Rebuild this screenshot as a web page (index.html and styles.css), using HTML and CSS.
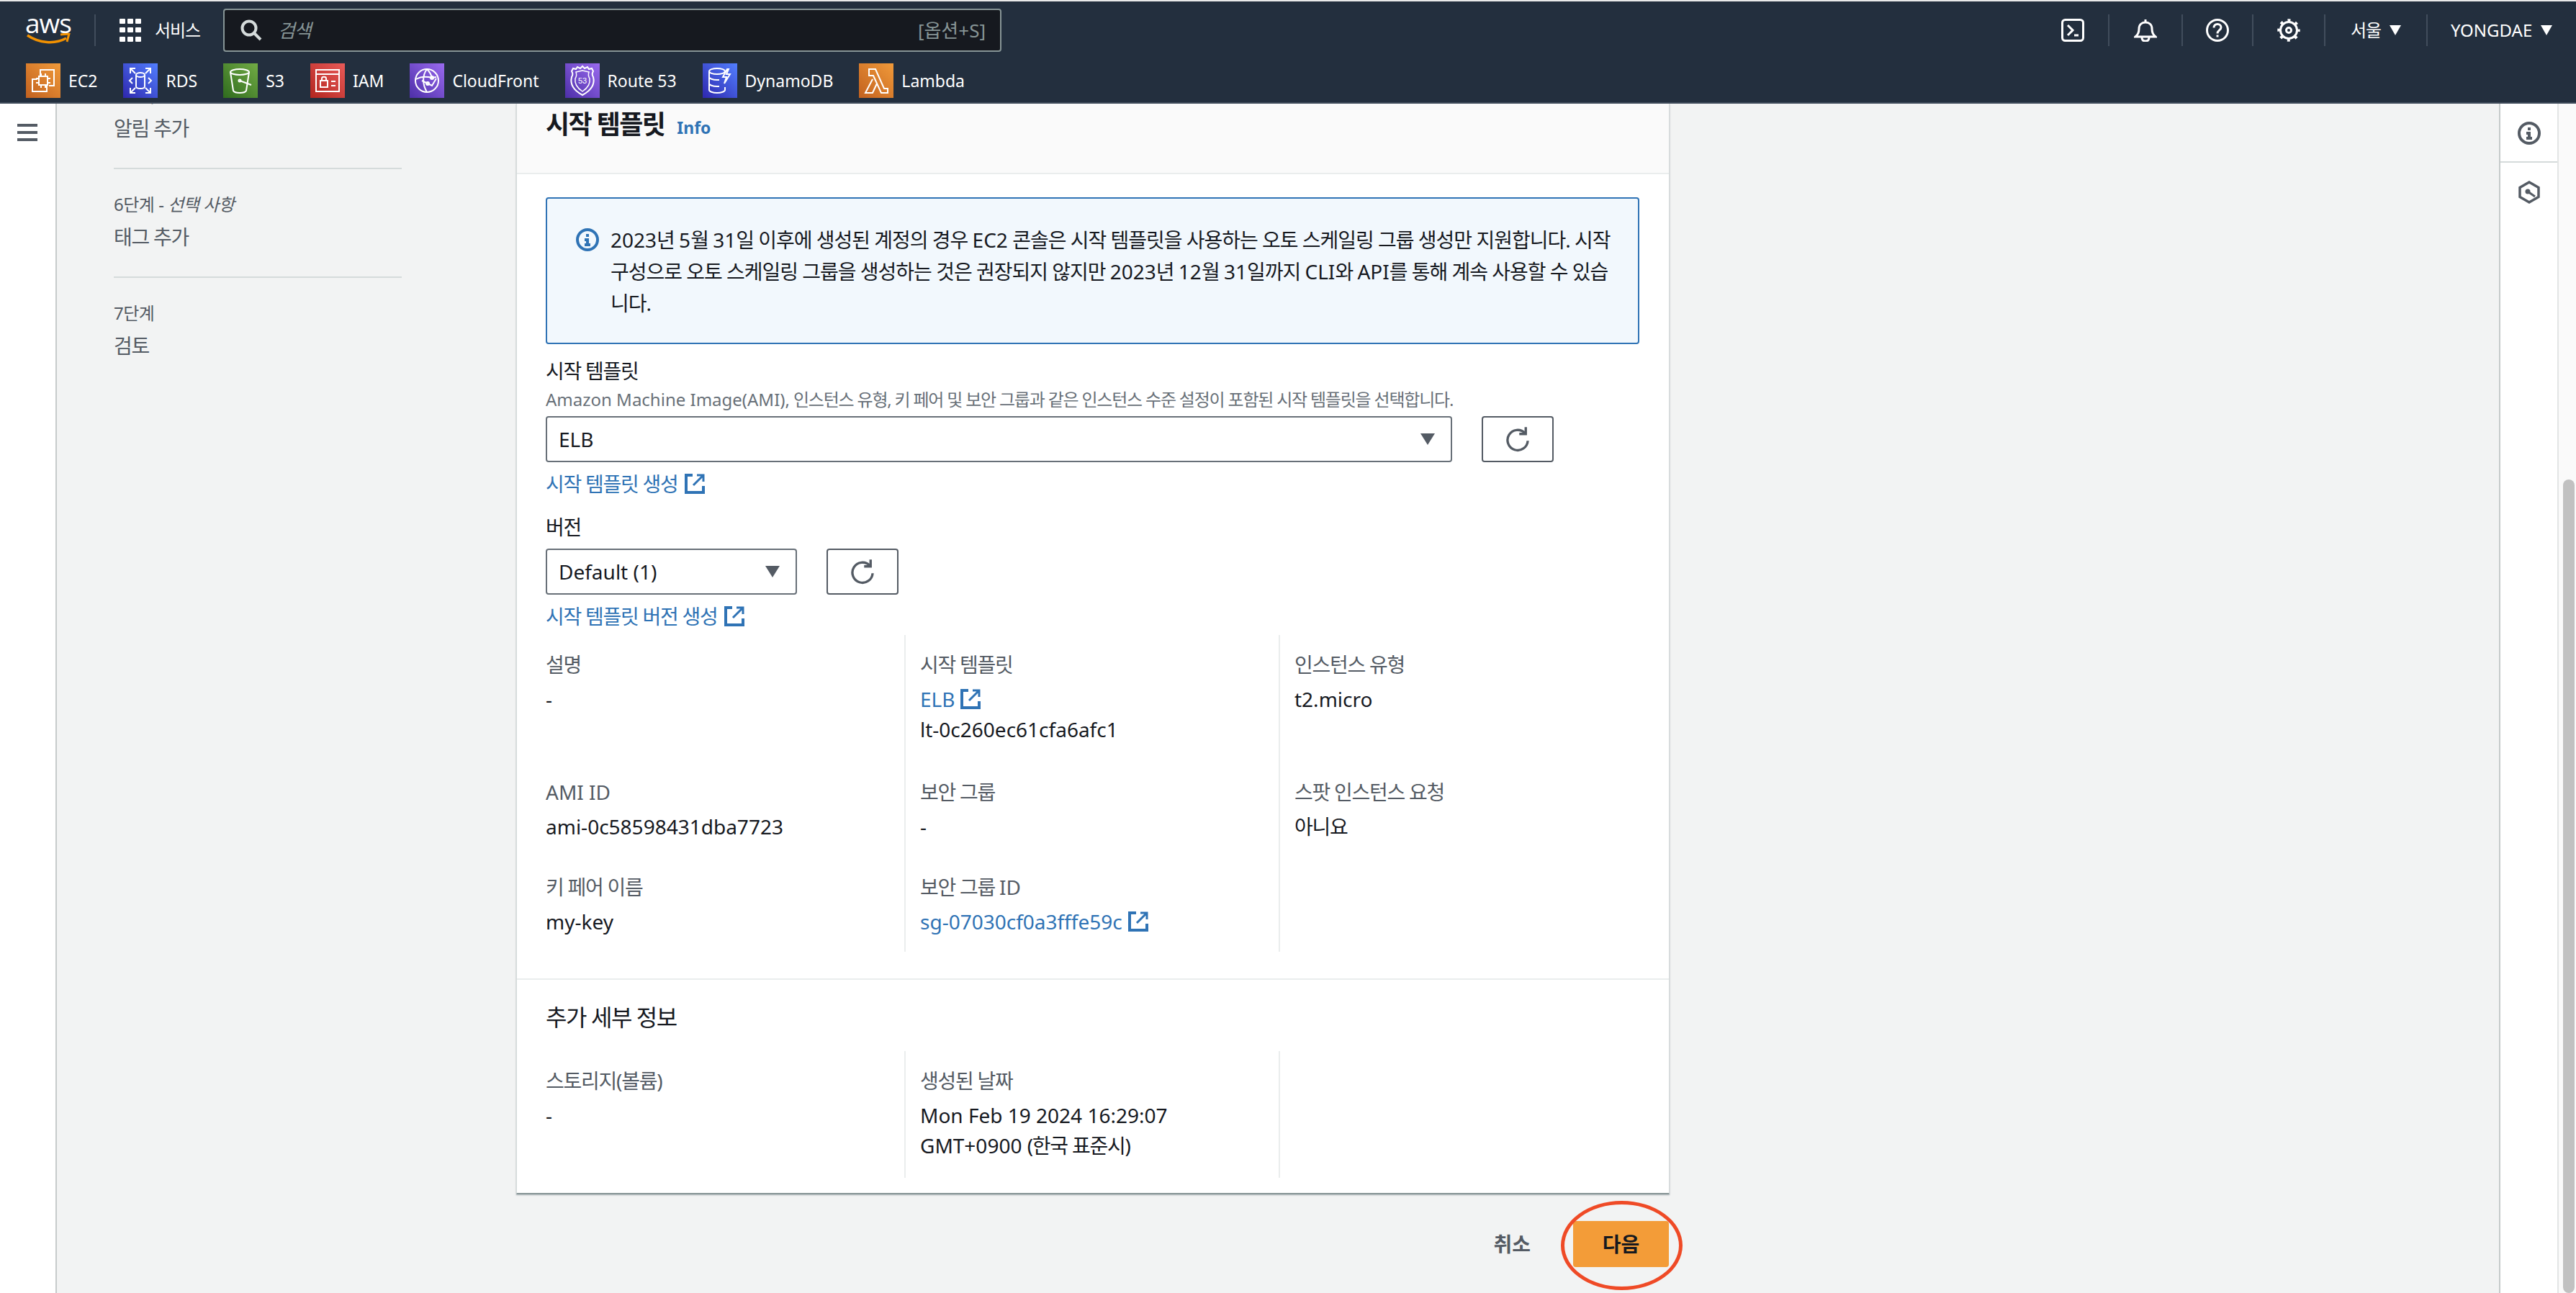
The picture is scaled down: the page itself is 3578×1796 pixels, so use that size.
FILE: index.html

```html
<!DOCTYPE html>
<html lang="ko">
<head>
    <meta charset="UTF-8">
    <title>Auto Scaling 그룹 생성</title>
    <link rel="stylesheet" href="styles.css">
</head>
<body>
    <header class="topbar">
        <div class="toprow">
            <div class="logo">
                <span class="logo-text">aws</span>
                <svg class="logo-smile" width="62" height="18" viewBox="0 0 62 18"><path d="M2 3c16 11 38 13 54 4" fill="none" stroke="#f29100" stroke-width="3.500"/><path d="M48 2l12-1-3 11" fill="none" stroke="#f29100" stroke-width="3"/></svg>
            </div>
            <div class="top-divider"></div>
            <svg class="grid-icon" width="30" height="32" viewBox="0 0 30 32" fill="#fff">
                <rect x="0" y="0" width="8" height="7" rx="1"/><rect x="11" y="0" width="8" height="7" rx="1"/><rect x="22" y="0" width="8" height="7" rx="1"/>
                <rect x="0" y="12" width="8" height="7" rx="1"/><rect x="11" y="12" width="8" height="7" rx="1"/><rect x="22" y="12" width="8" height="7" rx="1"/>
                <rect x="0" y="25" width="8" height="7" rx="1"/><rect x="11" y="25" width="8" height="7" rx="1"/><rect x="22" y="25" width="8" height="7" rx="1"/>
            </svg>
            <span class="services">서비스</span>
            <div class="search">
                <svg width="30" height="30" viewBox="0 0 30 30" fill="none" stroke="#d5dbdb" stroke-width="4"><circle cx="12" cy="12" r="9.500"/><path d="M19 19l9 9"/></svg>
                <span class="search-text">검색</span>
                <span class="search-key">[옵션+S]</span>
            </div>
            <div class="top-right">
                <div class="top-cell console">
                    <svg width="32" height="32" viewBox="0 0 32 32" fill="none" stroke="#fff" stroke-width="3"><rect x="1.500" y="1.500" width="29" height="29" rx="4"/><path d="M9 9l7 7-7 7"/><path d="M18 23h6"/></svg>
                </div>
                <div class="top-cell bell">
                    <svg width="32" height="32" viewBox="0 0 32 32" fill="none" stroke="#fff" stroke-width="3"><path d="M16 1v3"/><path d="M2 25c4-3 5-6 5-11 0-6 4-9 9-9s9 3 9 9c0 5 1 8 5 11z"/><path d="M11 26c0 4 2 5 5 5s5-1 5-5"/></svg>
                </div>
                <div class="top-cell help">
                    <svg width="32" height="32" viewBox="0 0 32 32" fill="none" stroke="#fff" stroke-width="3"><circle cx="16" cy="16" r="14.500"/><path d="M11 12.500c0-3 2-5 5-5s5 2 5 4.500c0 4-5 4-5 8.500"/><path d="M16 22.500v3"/></svg>
                </div>
                <div class="top-cell gear">
                    <svg width="32" height="32" viewBox="0 0 32 32" fill="none" stroke="#fff"><circle cx="16" cy="16" r="11.500" stroke-width="3"/><circle cx="16" cy="16" r="14" stroke-width="3.500" stroke-dasharray="4 7" stroke-dashoffset="2"/><circle cx="16" cy="16" r="3.500" stroke-width="3"/></svg>
                </div>
                <div class="top-cell region"><span>서울</span><i class="caret-white"></i></div>
                <div class="top-cell user"><span>YONGDAE</span><i class="caret-white"></i></div>
            </div>
        </div>
        <nav class="favorites">
            <a class="fav"><span class="svc orange"><svg width="48" height="48" viewBox="0 0 48 48" fill="none" stroke="#fff" stroke-width="2"><path d="M20 17v-8h19v22h-7"/><path d="M16 22H9v17h20v-8"/><rect x="18" y="18" width="12" height="12"/><path d="M21 14v4M27 14v4M21 30v4M27 30v4M14 21h4M14 27h4M30 21h4M30 27h4"/></svg></span>EC2</a>
            <a class="fav"><span class="svc blue"><svg width="48" height="48" viewBox="0 0 48 48" fill="none" stroke="#fff" stroke-width="2"><ellipse cx="24" cy="16" rx="6" ry="3"/><path d="M18 16v16c0 2 3 3 6 3s6-1 6-3V16"/><path d="M10 14V7h7M38 14V7h-7M10 34v7h7M38 34v7h-7M10 7l7 7M38 7l-7 7M10 41l7-7M38 41l-7-7"/><path d="M13 20l-4 4 4 4M35 20l4 4-4 4"/></svg></span>RDS</a>
            <a class="fav"><span class="svc green"><svg width="48" height="48" viewBox="0 0 48 48" fill="none" stroke="#fff" stroke-width="2"><ellipse cx="23" cy="12" rx="13" ry="4"/><path d="M10 12l4 26c1 2 5 3 9 3s8-1 9-3l4-26"/><path d="M23 24l16 6"/><circle cx="23" cy="24" r="1.500"/></svg></span>S3</a>
            <a class="fav"><span class="svc red"><svg width="48" height="48" viewBox="0 0 48 48" fill="none" stroke="#fff" stroke-width="2"><rect x="8" y="9" width="32" height="30"/><path d="M8 15h32"/><rect x="14" y="24" width="10" height="9"/><path d="M16 24v-3c0-3 6-3 6 0v3M29 25h6M29 31h6"/></svg></span>IAM</a>
            <a class="fav"><span class="svc purple"><svg width="48" height="48" viewBox="0 0 48 48" fill="none" stroke="#fff" stroke-width="2"><circle cx="24" cy="24" r="16"/><path d="M24 8c-6 8-7 20 0 32M24 8c4 4 6 8 7 12M9 22c7-4 14-4 22-2l6-1M17 24l14 7 6-10"/><circle cx="31" cy="20" r="2"/><circle cx="25" cy="28" r="2"/></svg></span>CloudFront</a>
            <a class="fav"><span class="svc purple"><svg width="48" height="48" viewBox="0 0 48 48" fill="none" stroke="#fff" stroke-width="2"><path d="M24 4l3 3 4-2 2 3 4-1 2 4c-2 3-2 5 0 8 2 8 0 17-15 25C9 36 7 27 9 19c2-3 2-5 0-8l2-4 4 1 2-3 4 2z"/><path d="M24 10l-9 2c1 3 1 6-1 9-1 6 1 12 10 18 9-6 11-12 10-18-2-3-2-6-1-9z" stroke-width="1.500"/><text x="24" y="28" fill="#fff" stroke="none" font-size="11" text-anchor="middle" font-family="Liberation Sans">53</text></svg></span>Route 53</a>
            <a class="fav"><span class="svc blue"><svg width="48" height="48" viewBox="0 0 48 48" fill="none" stroke="#fff" stroke-width="2"><ellipse cx="20" cy="11" rx="11" ry="4"/><path d="M9 11v8c0 2 5 4 11 4h3M9 19v9c0 2 5 4 11 4h3M9 28v9c0 2 5 4 11 4s11-2 11-4v-4M31 11v2"/><path d="M34 8l-6 11h5l-3 9 8-13h-5l3-7z"/></svg></span>DynamoDB</a>
            <a class="fav"><span class="svc orange"><svg width="48" height="48" viewBox="0 0 48 48" fill="none" stroke="#fff" stroke-width="2"><path d="M14 8h9l12 27h5v6h-9L20 17h-6zM19 22L9 41h10l6-13"/></svg></span>Lambda</a>
        </nav>
    </header>

    <div class="layout">
        <aside class="rail">
            <div class="hamburger"><span></span><span></span><span></span></div>
        </aside>

        <main class="main">
            <ul class="steps">
                <li class="step">
                    <small>5단계 - <em>선택 사항</em></small>
                    <span>알림 추가</span>
                </li>
                <li class="step">
                    <small>6단계 - <em>선택 사항</em></small>
                    <span>태그 추가</span>
                </li>
                <li class="step">
                    <small>7단계</small>
                    <span>검토</span>
                </li>
            </ul>

            <div class="content">
                <section class="panel">
                    <div class="panel-head">
                        <h2>시작 템플릿</h2>
                        <a class="info">Info</a>
                    </div>
                    <div class="panel-body">
                        <div class="alert">
                            <svg class="alert-icon" width="32" height="32" viewBox="0 0 32 32"><circle cx="16" cy="16" r="14" fill="none" stroke="#2f73b5" stroke-width="4"/><path d="M14 8h4v4h-4zM12 14h6v7h2v4h-8v-4h2v-3h-2z" fill="#2f73b5"/></svg>
                            <div class="alert-text">
                                <div class="alert-line"><span class="en">2023</span>년 <span class="en">5</span>월 <span class="en">31</span>일 이후에 생성된 계정의 경우 <span class="en">EC2</span> 콘솔은 시작 템플릿을 사용하는 오토 스케일링 그룹 생성만 지원합니다. 시작</div>
                                <div class="alert-line">구성으로 오토 스케일링 그룹을 생성하는 것은 권장되지 않지만 <span class="en">2023</span>년 <span class="en">12</span>월 <span class="en">31</span>일까지 <span class="en">CLI</span>와 <span class="en">API</span>를 통해 계속 사용할 수 있습</div>
                                <div class="alert-line">니다.</div>
                            </div>
                        </div>

                        <label class="field-label first">시작 템플릿</label>
                        <p class="field-desc"><span class="en">Amazon Machine Image(AMI),</span> 인스턴스 유형, 키 페어 및 보안 그룹과 같은 인스턴스 수준 설정이 포함된 시작 템플릿을 선택합니다.</p>
                        <div class="select-row">
                            <div class="select wide"><span>ELB</span><i class="caret"></i></div>
                            <button class="refresh"><svg width="36" height="36" viewBox="0 0 32 32" fill="none" stroke="#545b64" stroke-width="3"><path d="M25 8.500A12.500 12.500 0 1 0 28.500 18"/><path d="M26 1v8.500h-8"/></svg></button>
                        </div>
                        <a class="link">시작 템플릿 생성 <svg width="28" height="28" viewBox="0 0 28 28" fill="none" stroke="#2f73b5" stroke-width="4"><path d="M11 2H2v24h24v-9"/><path d="M12 16L25 3M17 2h9v9" stroke-width="3"/></svg></a>

                        <label class="field-label">버전</label>
                        <div class="select-row">
                            <div class="select narrow"><span>Default (1)</span><i class="caret"></i></div>
                            <button class="refresh"><svg width="36" height="36" viewBox="0 0 32 32" fill="none" stroke="#545b64" stroke-width="3"><path d="M25 8.500A12.500 12.500 0 1 0 28.500 18"/><path d="M26 1v8.500h-8"/></svg></button>
                        </div>
                        <a class="link">시작 템플릿 버전 생성 <svg width="28" height="28" viewBox="0 0 28 28" fill="none" stroke="#2f73b5" stroke-width="4"><path d="M11 2H2v24h24v-9"/><path d="M12 16L25 3M17 2h9v9" stroke-width="3"/></svg></a>

                        <div class="details">
                            <div class="cell row1"><div class="k">설명</div><div class="v">-</div></div>
                            <div class="cell row1"><div class="k">시작 템플릿</div><div class="v"><a class="inline-link">ELB <svg width="28" height="28" viewBox="0 0 28 28" fill="none" stroke="#2f73b5" stroke-width="4"><path d="M11 2H2v24h24v-9"/><path d="M12 16L25 3M17 2h9v9" stroke-width="3"/></svg></a></div><div class="v2">lt-0c260ec61cfa6afc1</div></div>
                            <div class="cell row1"><div class="k">인스턴스 유형</div><div class="v">t2.micro</div></div>
                            <div class="cell"><div class="k"><span class="en">AMI ID</span></div><div class="v">ami-0c58598431dba7723</div></div>
                            <div class="cell"><div class="k">보안 그룹</div><div class="v">-</div></div>
                            <div class="cell"><div class="k">스팟 인스턴스 요청</div><div class="v ko">아니요</div></div>
                            <div class="cell"><div class="k">키 페어 이름</div><div class="v">my-key</div></div>
                            <div class="cell"><div class="k">보안 그룹 <span class="en">ID</span></div><div class="v"><a class="inline-link">sg-07030cf0a3fffe59c <svg width="28" height="28" viewBox="0 0 28 28" fill="none" stroke="#2f73b5" stroke-width="4"><path d="M11 2H2v24h24v-9"/><path d="M12 16L25 3M17 2h9v9" stroke-width="3"/></svg></a></div></div>
                            <div class="cell"></div>
                        </div>
                    </div>
                    <div class="panel-extra">
                        <h3>추가 세부 정보</h3>
                        <div class="details details-one">
                            <div class="cell row1"><div class="k">스토리지(볼륨)</div><div class="v">-</div></div>
                            <div class="cell row1"><div class="k">생성된 날짜</div><div class="v">Mon Feb 19 2024 16:29:07</div><div class="v2">GMT+0900 <span class="ko">(한국 표준시)</span></div></div>
                            <div class="cell row1"></div>
                        </div>
                    </div>
                </section>

                <div class="actions">
                    <button class="btn-cancel">취소</button>
                    <div class="next-wrap">
                        <button class="btn-next">다음</button>
                        <div class="circle-mark"></div>
                    </div>
                </div>
            </div>
        </main>

        <aside class="tools">
            <div class="tool tool-info">
                <svg width="32" height="32" viewBox="0 0 32 32"><circle cx="16" cy="16" r="14" fill="none" stroke="#545b64" stroke-width="4"/><path d="M14 8h4v4h-4zM12 14h6v7h2v4h-8v-4h2v-3h-2z" fill="#545b64"/></svg>
            </div>
            <div class="tool">
                <svg width="32" height="32" viewBox="0 0 32 32" fill="none" stroke="#545b64" stroke-width="3.500"><path d="M16 2l13 7.500v13L16 30 3 22.500v-13z"/><path d="M14 15l10 7" stroke-width="3"/><circle cx="14" cy="15" r="3.500" fill="#545b64" stroke="none"/></svg>
            </div>
        </aside>

        <div class="scrollbar"><div class="thumb"></div></div>
    </div>
</body>
</html>
```

FILE: styles.css

```css
* {
    box-sizing: border-box;
}

html, body {
    margin: 0;
    height: 1796px;
    overflow: hidden;
}

body {
    display: flex;
    flex-direction: column;
    padding-top: 2px;
    background-color: #e9e9e9;
    font-family: "Noto Sans", "Noto Sans CJK KR", sans-serif;
    font-size: 28px;
    line-height: 44px;
    color: #16191f;
}

/* Hangul in the reference runs narrower than Noto CJK */
.services,
.region,
.search-text,
.step span,
h2,
h3,
.field-label,
.link,
.k,
.ko {
    letter-spacing: -0.045em;
}

.en {
    letter-spacing: 0;
}

/* header */
.topbar {
    position: relative;
    z-index: 2;
    height: 142px;
    padding-top: 10px;
    background-color: #232f3e;
    border-bottom: 2px solid #414d5c;
    color: #fff;
}

.toprow {
    display: flex;
    align-items: center;
    height: 60px;
}

.logo {
    display: flex;
    flex-direction: column;
    align-items: center;
    width: 62px;
    margin-left: 36px;
}

.logo-text {
    font-family: "Open Sans", sans-serif;
    font-size: 37px;
    font-weight: 500;
    line-height: 24px;
    letter-spacing: -1px;
}

.logo-smile {
    margin-top: 2px;
}

.top-divider {
    width: 2px;
    height: 44px;
    margin: 0 33px;
    background-color: #414d5c;
}

.services {
    margin-left: 19px;
    width: 95px;
    font-size: 24px;
}

.search {
    display: flex;
    align-items: center;
    width: 1081px;
    height: 60px;
    padding: 0 20px 0 22px;
    background-color: #16191f;
    border: 2px solid #879596;
    border-radius: 4px;
    color: #879596;
    font-size: 26px;
}

.search-text {
    margin-left: 22px;
    font-style: italic;
}

.search-key {
    margin-left: auto;
}

.top-right {
    display: flex;
    align-items: center;
    margin-left: auto;
    font-size: 24px;
}

.top-cell {
    display: flex;
    align-items: center;
    justify-content: center;
    height: 44px;
    border-right: 2px solid #414d5c;
}

.console { width: 100px; }
.bell { width: 102px; }
.help { width: 98px; }
.gear { width: 100px; }

.region {
    width: 142px;
    gap: 12px;
}

.user {
    width: 206px;
    gap: 12px;
    justify-content: flex-start;
    padding-left: 32px;
    border-right: none;
}

.caret-white {
    border-left: 8px solid transparent;
    border-right: 8px solid transparent;
    border-top: 14px solid #fff;
}

.favorites {
    display: flex;
    height: 48px;
    margin-top: 16px;
    padding-left: 36px;
    gap: 36px;
}

.fav {
    display: flex;
    align-items: center;
    gap: 11px;
    font-size: 23px;
}

.svc {
    display: block;
    width: 48px;
    height: 48px;
}

.svc svg {
    display: block;
}

.orange { background: linear-gradient(45deg, #c2611f, #f09a3a); }
.blue { background: linear-gradient(45deg, #2e27ad, #527fff); }
.green { background: linear-gradient(45deg, #2f6b1e, #72ab45); }
.red { background: linear-gradient(45deg, #b3261f, #e85a58); }
.purple { background: linear-gradient(45deg, #4d2fa8, #9a6aef); }

/* page columns */
.layout {
    flex: 1;
    display: flex;
    min-height: 0;
    background-color: #f2f3f3;
}

.rail {
    width: 79px;
    padding: 28px 0 0 24px;
    background-color: #fff;
    border-right: 2px solid #c6cbcb;
}

.hamburger {
    display: flex;
    flex-direction: column;
    gap: 6px;
    width: 28px;
}

.hamburger span {
    height: 4px;
    background-color: #545b64;
}

.main {
    flex: 1;
    display: flex;
    align-items: flex-start;
    min-width: 0;
    overflow: hidden;
}

/* wizard steps, scrolled under the header */
.steps {
    width: 638px;
    margin: -27px 0 0;
    padding: 0 0 0 79px;
    list-style: none;
    color: #545b64;
}

.step {
    width: 400px;
    padding-bottom: 33px;
    margin-bottom: 33px;
    border-bottom: 2px solid #d5dbdb;
}

.step:last-child {
    border-bottom: none;
}

.step small {
    display: block;
    font-size: 24px;
    line-height: 32px;
    letter-spacing: -0.02em;
}

.step span {
    display: block;
    margin-top: 7px;
}

/* panel */
.content {
    width: 1602px;
}

.panel {
    background-color: #fff;
    border-left: 1px solid #d5dbdb;
    border-right: 1px solid #d5dbdb;
    border-bottom: 2px solid #879596;
    box-shadow: 0 1px 2px rgba(0, 28, 36, 0.3);
}

.panel-head {
    display: flex;
    align-items: baseline;
    gap: 17px;
    height: 98px;
    padding: 7px 0 0 40px;
    background-color: #fafafa;
    border-bottom: 2px solid #eaeded;
}

.panel-head h2 {
    margin: 0;
    font-size: 36px;
    font-weight: 700;
    line-height: 44px;
}

.info {
    color: #2f73b5;
    font-size: 23px;
    font-weight: 700;
}

.panel-body {
    padding: 32px 41px 37px 40px;
}

.alert {
    display: flex;
    gap: 16px;
    height: 204px;
    padding: 35px 0 0 40px;
    background-color: #f2f8fd;
    border: 2px solid #2f73b5;
    border-radius: 4px;
}

.alert-icon {
    flex: none;
    margin-top: 6px;
}

.alert-text {
    letter-spacing: -0.036em;
}

.alert-line {
    height: 44px;
    white-space: nowrap;
}

.field-label {
    display: block;
    margin-top: 16px;
}

.field-label.first {
    margin-top: 15px;
}

.field-desc {
    margin: 2px 0 7px;
    font-size: 24px;
    line-height: 32px;
    letter-spacing: -0.05em;
    color: #687078;
}

.select-row {
    display: flex;
    gap: 41px;
}

.field-label + .select-row {
    margin-top: 8px;
}

.select {
    display: flex;
    align-items: center;
    justify-content: space-between;
    height: 64px;
    padding: 0 22px 0 16px;
    border: 2px solid #687078;
    border-radius: 4px;
}

.wide { width: 1259px; }
.narrow { width: 349px; }

.caret {
    border-left: 10px solid transparent;
    border-right: 10px solid transparent;
    border-top: 16px solid #545b64;
}

.refresh {
    display: flex;
    align-items: center;
    justify-content: center;
    width: 100px;
    height: 64px;
    padding: 0;
    background-color: #fff;
    border: 2px solid #545b64;
    border-radius: 4px;
}

.link {
    display: flex;
    align-items: center;
    gap: 9px;
    margin-top: 8px;
    color: #2f73b5;
}

.inline-link {
    display: inline-flex;
    align-items: center;
    gap: 8px;
    color: #2f73b5;
}

/* key/value grid */
.details {
    display: grid;
    grid-template-columns: 500px 520px 1fr;
    grid-template-rows: 196px 132px 112px;
    margin-top: 4px;
}

.details-one {
    grid-template-rows: 176px;
    margin-top: 25px;
}

.cell {
    padding-left: 20px;
    border-right: 2px solid #eaeded;
}

.cell:nth-child(3n+1) {
    padding-left: 0;
}

.cell:nth-child(3n) {
    border-right: none;
}

.cell.row1 {
    padding-top: 19px;
}

.k {
    color: #545b64;
}

.v {
    margin-top: 4px;
}

.v2 {
    margin-top: -2px;
}

.panel-extra {
    padding: 30px 41px 21px 40px;
    border-top: 2px solid #eaeded;
}

.panel-extra h3 {
    margin: 0;
    font-size: 32px;
    font-weight: 400;
    line-height: 44px;
}

/* bottom buttons */
.actions {
    display: flex;
    justify-content: flex-end;
    align-items: center;
    gap: 59px;
    margin-top: 37px;
    padding-right: 1px;
}

.btn-cancel {
    padding: 0;
    background: none;
    border: none;
    color: #545b64;
    font: inherit;
    font-weight: 700;
}

.next-wrap {
    position: relative;
}

.btn-next {
    display: block;
    width: 133px;
    height: 64px;
    background-color: #f39c38;
    border: none;
    border-radius: 4px;
    color: #16191f;
    font: inherit;
    font-weight: 700;
}

.circle-mark {
    position: absolute;
    left: -17px;
    top: -28px;
    width: 169px;
    height: 124px;
    border: 5px solid #ef4a26;
    border-radius: 50%;
}

/* right side */
.tools {
    width: 83px;
    background-color: #fff;
    border-left: 2px solid #c6cbcb;
    border-right: 2px solid #e3e5e5;
}

.tool {
    display: flex;
    justify-content: center;
    padding-top: 25px;
}

.tool-info {
    height: 82px;
    border-bottom: 2px solid #d5dbdb;
}

.scrollbar {
    width: 24px;
    padding: 522px 2px 0 6px;
    background-color: #fafafa;
}

.thumb {
    height: 100%;
    background-color: #c1c1c1;
    border-radius: 8px;
}
```
